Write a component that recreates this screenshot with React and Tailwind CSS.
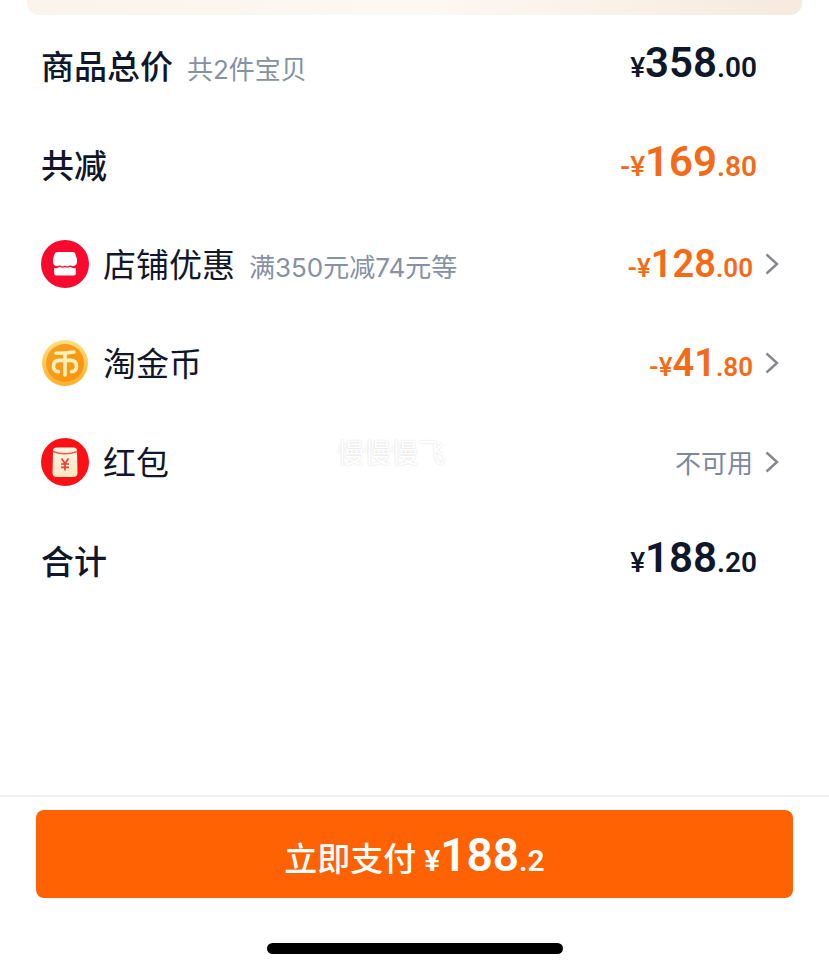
import { clsx } from 'clsx';

const rows = [
  { id: 'total', label: '商品总价', note: '共2件宝贝', amount: ['358', '.00'], strong: true },
  { id: 'reduced', label: '共减', amount: ['169', '.80'], minus: true, strong: true },
  { id: 'shop', label: '店铺优惠', note: '满350元减74元等', amount: ['128', '.00'], minus: true, icon: ShopIcon, link: true },
  { id: 'coin', label: '淘金币', amount: ['41', '.80'], minus: true, icon: CoinIcon, link: true },
  { id: 'packet', label: '红包', text: '不可用', icon: PacketIcon, link: true, watermark: '慢慢慢飞' },
  { id: 'sum', label: '合计', amount: ['188', '.20'], strong: true },
];

function ShopIcon() {
  return (
    <svg viewBox="0 0 48 48" className="size-12 shrink-0" aria-hidden="true">
      <circle cx="24" cy="24" r="24" fill="#f8092f" />
      <path
        d="M16.500 12h15c1.600 0 2.500.7 3 2.200l1.300 4.300c.4 1.500.4 3.500 0 4.800-.4 1.200-1 2-2 2.500-1.500.8-3 .6-4.600-.5-1.700 1.400-3.300 1.400-5.200.2-1.900 1.200-3.500 1.200-5.200-.2-1.600 1.100-3.100 1.300-4.600.5-1-.5-1.600-1.300-2-2.500-.4-1.300-.4-3.300 0-4.800l1.300-4.300c.5-1.500 1.400-2.200 3-2.200z"
        fill="#fff"
      />
      <path
        d="M13.200 28c2.300.4 4.100 0 5.800-1.200 1.600 1.200 3.400 1.200 5 .1 1.600 1.100 3.400 1.100 5-.1 1.700 1.200 3.500 1.600 5.800 1.200v5.500c0 1.300-.8 2-2 2H15.200c-1.200 0-2-.7-2-2z"
        fill="#fff"
      />
    </svg>
  );
}

function CoinIcon() {
  return (
    <svg viewBox="0 0 48 48" className="size-12 shrink-0" aria-hidden="true">
      <defs>
        <linearGradient id="coinRim" x1="0" y1="0" x2="0" y2="1">
          <stop offset="0" stopColor="#ffdf80" />
          <stop offset="1" stopColor="#fdb02c" />
        </linearGradient>
        <linearGradient id="coinFace" x1="0" y1="0" x2="1" y2="1">
          <stop offset="0" stopColor="#f5a021" />
          <stop offset="1" stopColor="#fc930b" />
        </linearGradient>
      </defs>
      <circle cx="24" cy="24" r="23" fill="url(#coinRim)" />
      <circle cx="24" cy="24" r="19" fill="url(#coinFace)" />
      <g fill="none" stroke="#fff0bd" strokeWidth="3.600" strokeLinecap="round" strokeLinejoin="round">
        <path d="M15 14.200c6.500 0 12-.3 18-1.200" />
        <path d="M24 14v22" />
        <path d="M17.500 32.800c-3.300-.4-5-2.400-5-5.400 0-3.800 2.300-6 6-6h11c3.700 0 6 2.200 6 6 0 3-1.700 5-5 5.400" />
      </g>
    </svg>
  );
}

function PacketIcon() {
  return (
    <svg viewBox="0 0 48 48" className="size-12 shrink-0" aria-hidden="true">
      <defs>
        <linearGradient id="packetBody" x1="0" y1="0" x2="0" y2="1">
          <stop offset="0" stopColor="#fff5e6" />
          <stop offset="1" stopColor="#ffe6bd" />
        </linearGradient>
      </defs>
      <circle cx="24" cy="24" r="24" fill="#fb1115" />
      <path
        d="M15.500 9.500h17c2.300 0 3.500 1.200 3.500 3.500l.5 22c0 2.500-1.500 4-4 4h-17c-2.500 0-4-1.500-4-4l.5-22c0-2.300 1.200-3.500 3.500-3.500z"
        fill="url(#packetBody)"
      />
      <path d="M11.800 13.500c7.500 2.800 17 2.800 24.400 0" fill="none" stroke="#e3604b" strokeWidth="1.500" />
      <path d="M20.500 20.500l3.500 5 3.500-5M24 25.500v7M20 26h8M20 29.300h8" fill="none" stroke="#e5403a" strokeWidth="1.700" />
    </svg>
  );
}

function Chevron() {
  return (
    <svg viewBox="0 0 14 22" className="ml-3 h-[22px] w-3.5 shrink-0" aria-hidden="true">
      <path d="M1.500 1.500L12 11 1.500 20.500" fill="none" stroke="#85878c" strokeWidth="2.400" />
    </svg>
  );
}

function Price({ amount, minus, link }) {
  return (
    <span
      className={clsx(
        "flex items-baseline font-['Roboto',sans-serif] leading-none font-semibold",
        link ? 'text-[26px]' : 'pb-1.5 text-[28px]',
        minus ? 'text-[#f56a16]' : 'text-[#0f172a]',
      )}
    >
      {minus && <span>-</span>}
      <span className="font-medium">¥</span>
      <span className={link ? 'text-[38px]' : 'text-[42px]'}>{amount[0]}</span>
      <span>{amount[1]}</span>
    </span>
  );
}

function Row({ row }) {
  const Tag = row.link ? 'button' : 'div';
  const Icon = row.icon;
  return (
    <Tag className="relative flex h-[99px] w-full items-center justify-between text-left">
      <span className="flex items-center">
        {Icon && (
          <span className="mr-3.5">
            <Icon />
          </span>
        )}
        <span className="flex items-baseline gap-3.5 pt-1">
          <span className={clsx('text-[33px] text-[#10172a]', row.strong && 'font-medium')}>{row.label}</span>
          {row.note && <span className="text-[26px] text-[#8591a5]">{row.note}</span>}
        </span>
      </span>
      {row.watermark && (
        <span className="absolute top-[22px] left-[296px] text-[27px] text-white [text-shadow:0_0_2px_#d4d4d4]">
          {row.watermark}
        </span>
      )}
      <span className={clsx('flex items-center', !row.link && 'pr-[22px]')}>
        {row.amount && <Price amount={row.amount} minus={row.minus} link={row.link} />}
        {row.text && <span className="pt-1 text-[26px] text-[#7c889d]">{row.text}</span>}
        {row.link && <Chevron />}
      </span>
    </Tag>
  );
}

export default function App() {
  return (
    <div className="flex min-h-screen flex-col bg-white font-['Inter','Noto_Sans_CJK_SC',sans-serif]">
      <div className="mx-[27px] h-[15px] rounded-b-xl bg-linear-to-r from-[#faf4ec] via-[#fef8f3] to-[#f6eadf]" />

      <main className="flex-1 pt-px pr-[50px] pl-[41px]">
        {rows.map((row) => (
          <Row key={row.id} row={row} />
        ))}
      </main>

      <footer className="border-t-2 border-[#efefef] px-9 pt-[13px] pb-[17px]">
        <button className="flex h-[88px] w-full items-center justify-center rounded-lg bg-[#ff6203] pt-2 text-white">
          <span className="flex items-baseline">
            <span className="text-[33px] font-medium">立即支付</span>
            <span className="ml-2 flex items-baseline font-['Roboto',sans-serif] text-[30px] leading-none font-semibold">
              <span>¥</span>
              <span className="text-[46px]">188</span>
              <span>.2</span>
            </span>
          </span>
        </button>
        <div className="mx-auto mt-[45px] h-[11px] w-[296px] rounded-full bg-black" />
      </footer>
    </div>
  );
}
